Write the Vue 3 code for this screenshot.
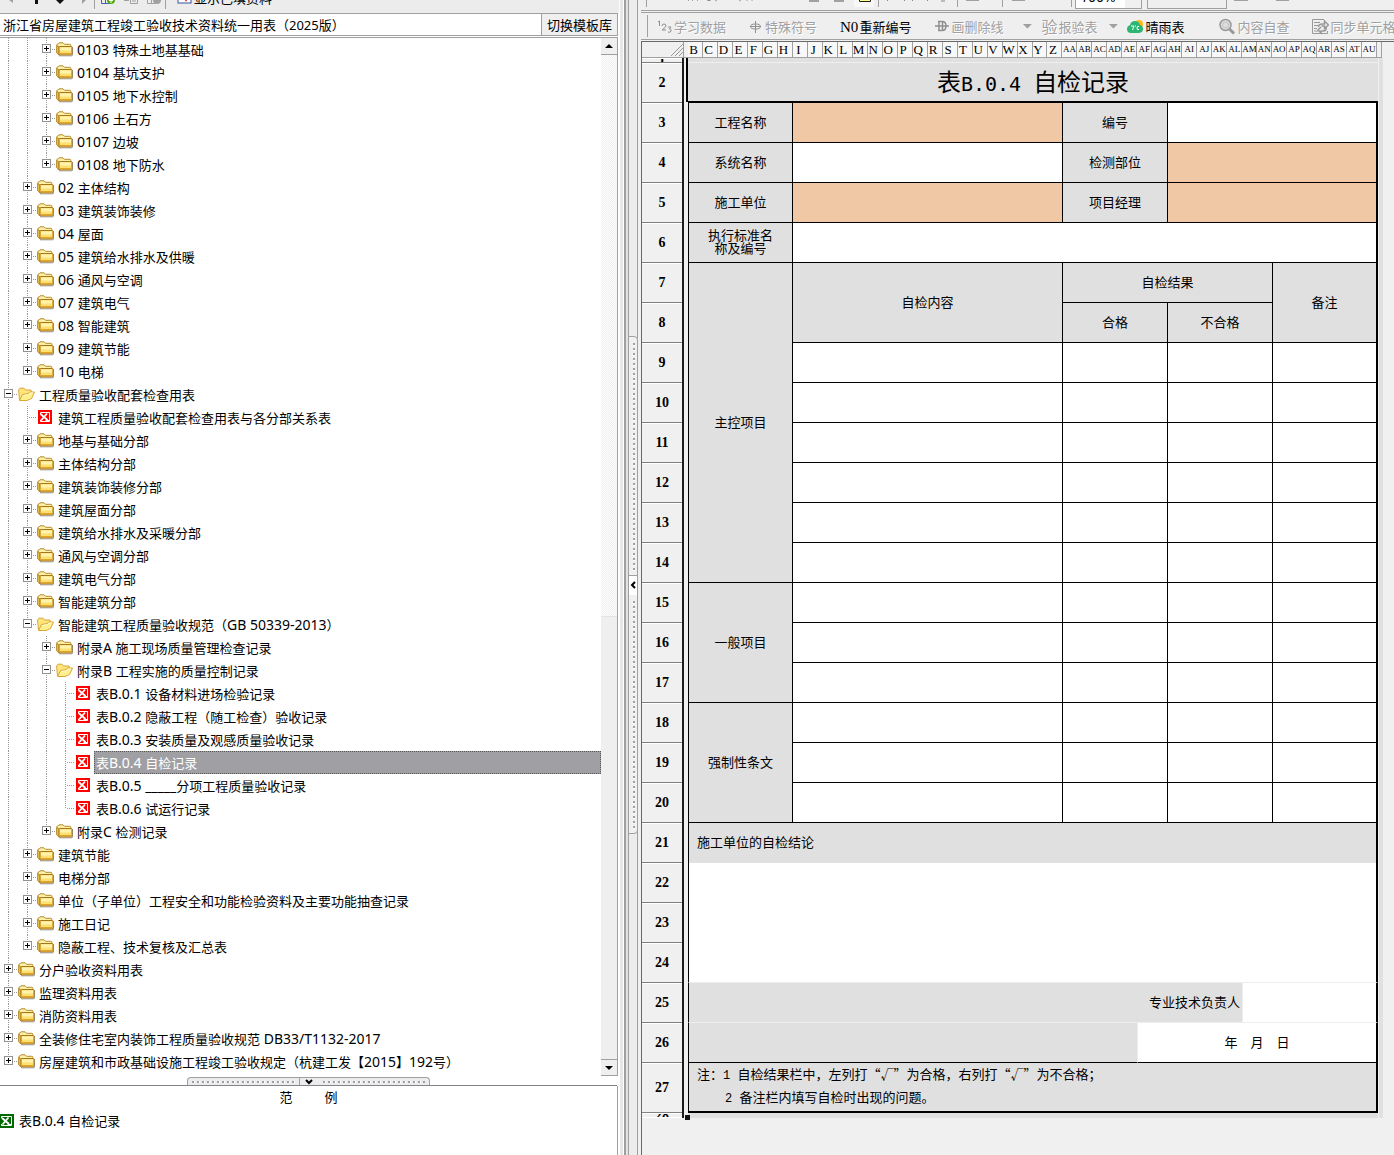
<script setup>
import { computed, ref } from 'vue';

// [nivel, tipo, texto] -> c: carpeta cerrada, o: carpeta abierta, x: hoja
const nodes = [
    [2, 'c', '0103 特殊土地基基础'],
    [2, 'c', '0104 基坑支护'],
    [2, 'c', '0105 地下水控制'],
    [2, 'c', '0106 土石方'],
    [2, 'c', '0107 边坡'],
    [2, 'c', '0108 地下防水'],
    [1, 'c', '02 主体结构'],
    [1, 'c', '03 建筑装饰装修'],
    [1, 'c', '04 屋面'],
    [1, 'c', '05 建筑给水排水及供暖'],
    [1, 'c', '06 通风与空调'],
    [1, 'c', '07 建筑电气'],
    [1, 'c', '08 智能建筑'],
    [1, 'c', '09 建筑节能'],
    [1, 'c', '10 电梯'],
    [0, 'o', '工程质量验收配套检查用表'],
    [1, 'x', '建筑工程质量验收配套检查用表与各分部关系表'],
    [1, 'c', '地基与基础分部'],
    [1, 'c', '主体结构分部'],
    [1, 'c', '建筑装饰装修分部'],
    [1, 'c', '建筑屋面分部'],
    [1, 'c', '建筑给水排水及采暖分部'],
    [1, 'c', '通风与空调分部'],
    [1, 'c', '建筑电气分部'],
    [1, 'c', '智能建筑分部'],
    [1, 'o', '智能建筑工程质量验收规范（GB 50339-2013）'],
    [2, 'c', '附录A 施工现场质量管理检查记录'],
    [2, 'o', '附录B 工程实施的质量控制记录'],
    [3, 'x', '表B.0.1 设备材料进场检验记录'],
    [3, 'x', '表B.0.2 隐蔽工程（随工检查）验收记录'],
    [3, 'x', '表B.0.3 安装质量及观感质量验收记录'],
    [3, 'x', '表B.0.4 自检记录'],
    [3, 'x', '表B.0.5 _____分项工程质量验收记录'],
    [3, 'x', '表B.0.6 试运行记录'],
    [2, 'c', '附录C 检测记录'],
    [1, 'c', '建筑节能'],
    [1, 'c', '电梯分部'],
    [1, 'c', '单位（子单位）工程安全和功能检验资料及主要功能抽查记录'],
    [1, 'c', '施工日记'],
    [1, 'c', '隐蔽工程、技术复核及汇总表'],
    [0, 'c', '分户验收资料用表'],
    [0, 'c', '监理资料用表'],
    [0, 'c', '消防资料用表'],
    [0, 'c', '全装修住宅室内装饰工程质量验收规范 DB33/T1132-2017'],
    [0, 'c', '房屋建筑和市政基础设施工程竣工验收规定（杭建工发【2015】192号）'],
];

const selected = ref(31);

// Separa el texto latino del chino para darle su propio tamaño
const split = (text) =>
    (text.match(/[\x20-\x7e]+|[^\x20-\x7e]+/g) || []).map((t) => ({ t, latin: t.charCodeAt(0) < 127 }));

// ¿Sigue habiendo hermanos en ese nivel más abajo?
const continues = (index, level) => {
    for (let i = index + 1; i < nodes.length; i++) {
        if (nodes[i][0] === level) return true;
        if (nodes[i][0] < level) return false;
    }
    return false;
};

const rows = computed(() =>
    nodes.map(([level, kind, text], i) => ({
        kind,
        runs: split(text),
        cells: Array.from({ length: level + 1 }, (_, l) => ({
            own: l === level,
            line: continues(i, l) ? 'full' : l === level ? 'half' : 'none',
        })),
    })),
);

// Columnas B..AU
const columns = Array.from({ length: 46 }, (_, i) => {
    const n = i + 1;
    return n < 26 ? String.fromCharCode(65 + n) : 'A' + String.fromCharCode(65 + n - 26);
});

const rowNumbers = Array.from({ length: 28 }, (_, i) => i + 1);
const title = split('表B.0.4 自检记录');
const groups = [
    { name: '一般项目', count: 3 },
    { name: '强制性条文', count: 3 },
];
</script>

<template>
    <div class="app">
        <section class="left">
            <div class="top-tools">
                <svg class="nav-icons" width="96" height="13" viewBox="0 0 96 13">
                    <path d="M9 0h4v3l-4-3z" fill="#a0a0a0" />
                    <path d="M35 0h3v4h-3z" fill="#111" />
                    <path d="M56 0h8l-4 4z" fill="#111" />
                    <path d="M82 0h4l-4 4z" fill="#a0a0a0" />
                    <path d="M94.500 0v9" stroke="#a0a0a0" />
                </svg>
                <svg class="edit-icons" width="70" height="13" viewBox="0 0 70 13">
                    <path d="M5.500 0v3.500h10M9.500 0v3" stroke="#3f62b5" fill="none" />
                    <circle cx="15" cy="0" r="4" fill="#58ad12" />
                    <path d="M15 0v3M13 .5h4" stroke="#fff" />
                    <path d="M28 .5h5M34.500 0v3.500h7V0M36 1h4" stroke="#a0a0a0" fill="none" />
                    <path d="M51.500 0v3.500h8M55.500 0v3" stroke="#a0a0a0" fill="none" />
                    <circle cx="61" cy="0" r="4" fill="#a0a0a0" />
                    <path d="M69.500 0v9" stroke="#a0a0a0" />
                </svg>
                <label class="show-filled">
                    <svg width="15" height="15" viewBox="0 0 15 15">
                        <rect x="1" y="1" width="13" height="11" fill="#fff" stroke="#3551a5" />
                        <path d="M7 7h4l-2 4z" fill="#e11" />
                    </svg>
                    显示已填资料
                </label>
            </div>
            <div class="library">
                <input class="library-name" type="text" aria-label="模板库" value="浙江省房屋建筑工程竣工验收技术资料统一用表（2025版）" readonly />
                <button class="library-switch" type="button">切换模板库</button>
            </div>
            <div class="tree-box">
                <ul class="tree">
                    <li v-for="(row, i) in rows" :key="i" class="node">
                        <span v-for="(cell, c) in row.cells" :key="c" class="guide" :class="[cell.line, { own: cell.own }]">
                            <button
                                v-if="cell.own && row.kind !== 'x'"
                                class="toggle"
                                :class="{ plus: row.kind === 'c' }"
                                type="button"
                                :aria-expanded="row.kind === 'o'"
                                aria-label="展开"
                            ></button>
                        </span>
                        <svg v-if="row.kind === 'c'" class="icon" width="18" height="16" viewBox="0 0 18 16">
                            <path d="M3 13.800h12.500q1 0 1-1V5" fill="none" stroke="#6b6b6b" stroke-opacity=".7" />
                            <path d="M.8 10.500V3q0-1 1-1L3 .8h4L8.500 2.300h5.300q1 0 1 1v1.200" fill="#fff0a8" stroke="#b58a2a" />
                            <path d="M.8 3.500v7.500l2.200 2V5z" fill="#f5cf55" stroke="#b58a2a" />
                            <path d="M3 12.800V5.300q0-.8.800-.8h11.400q.8 0 .8.800v6.700q0 .8-.8.800z" fill="#ffdf70" stroke="#a8761a" />
                            <path d="M4 5.500h11v3H4z" fill="#fff3ae" />
                            <path d="M4 11h11v1.500H4z" fill="#dfa42c" />
                        </svg>
                        <svg v-else-if="row.kind === 'o'" class="icon" width="18" height="16" viewBox="0 0 18 16">
                            <path d="M1.500 13L.6 3 2 1.200h4L7.500 3H13l.5 3" fill="#ffe57c" stroke="#d9a638" />
                            <path d="M1.500 13.500L4.500 7.500l6-1 1-1.500h5L13.500 11.500l-4.500 2z" fill="#fff08f" stroke="#d9a638" />
                            <path d="M5.500 8.500l5.500-1 .8-1.500H15" fill="none" stroke="#fffbd0" />
                        </svg>
                        <svg v-else class="icon sheet-icon" width="17" height="16" viewBox="0 0 17 16">
                            <rect width="14" height="14" fill="#f00" />
                            <path d="M2.500 4V2.500h9v9h-9V10" fill="none" stroke="#fff" />
                            <path d="M2.500 4l7 6M9 3.500l-6 7" stroke="#fff" stroke-width="1.800" />
                            <path d="M7.500 10.500h3.500" fill="none" stroke="#fff" />
                        </svg>
                        <button class="caption" :class="{ selected: selected === i }" type="button" @click="selected = i">
                            <span v-for="(run, r) in row.runs" :key="r" :class="{ latin: run.latin }">{{ run.t }}</span>
                        </button>
                    </li>
                </ul>
                <div class="scrollbar">
                    <button class="scroll-btn" type="button" aria-label="向上"><span class="tri up"></span></button>
                    <div class="track"></div>
                    <div class="thumb"></div>
                    <button class="scroll-btn" type="button" aria-label="向下"><span class="tri down"></span></button>
                </div>
            </div>
            <div class="h-split">
                <div class="h-handle">
                    <span class="dots"></span>
                    <button class="h-fold" type="button" aria-label="折叠">
                        <svg width="10" height="6" viewBox="0 0 10 6"><path d="M2 1l3 3 3-3" fill="none" stroke="#000" stroke-width="2" /></svg>
                    </button>
                    <span class="dots"></span>
                </div>
            </div>
            <div class="samples">
                <h2 class="samples-title"><span>范</span><span>例</span></h2>
                <a class="sample" href="#">
                    <svg width="14" height="14" viewBox="0 0 14 14">
                        <rect width="14" height="14" fill="#006a00" />
                        <path d="M1.500 4V2.500h10v9h-10V10" fill="none" stroke="#fff" />
                        <path d="M2 4l7 6M8.500 3.500l-6 7" stroke="#fff" stroke-width="1.800" />
                        <path d="M7.500 10.500h3.500" fill="none" stroke="#fff" />
                    </svg>
                    <span class="sample-name">表<span class="latin">B.0.4 </span>自检记录</span>
                </a>
            </div>
        </section>

        <div class="v-split">
            <div class="v-handle">
                <span class="dots"></span>
                <button class="v-fold" type="button" aria-label="折叠">
                    <svg width="6" height="8" viewBox="0 0 6 8"><path d="M5 1L2 4l3 3" fill="none" stroke="#000" stroke-width="2" /></svg>
                </button>
                <span class="dots"></span>
            </div>
        </div>

        <section class="right">
            <div class="format-tools">
                <svg class="format-icons" width="428" height="10" viewBox="0 0 428 10">
                    <path d="M-.5 0v7" stroke="#a0a0a0" />
                    <path d="M41 0l1 1M45 0l1 1M50 0l1 1M60 0h3v1M68 0l2 1M100 0v1M105 0v1M92 0l2 1" stroke="#a0a0a0" />
                    <path d="M162 1h10M187 1h10" stroke="#a0a0a0" stroke-width="2" />
                    <rect x="207" width="20" height="7" fill="#f8f8f8" />
                    <path d="M212.500 0v1.500h11V0" fill="#ffff8c" stroke="#222" />
                    <path d="M231.500 0v7M310.500 0v7M355.500 0v7M424.500 0v7" stroke="#a0a0a0" />
                    <path d="M240.500 0v1M257.500 0v1M265.500 0v1M280.500 0v1M298 1h-4" stroke="#888" fill="none" />
                    <path d="M319 0h13M365 0h13" stroke="#a0a0a0" stroke-width="2" />
                </svg>
                <input class="zoom" type="text" aria-label="显示比例" value="100%" />
                <input class="combo" type="text" aria-label="字体" />
                <svg class="tail-icons" width="60" height="10" viewBox="0 0 60 10">
                    <path d="M0 .5h14M42 .5h13" stroke="#a0a0a0" />
                </svg>
            </div>
            <div class="form-tools">
                <button class="tool off" type="button">
                    <svg width="16" height="16" viewBox="0 0 16 16" fill="none" stroke="#909090">
                        <path d="M1 3l1.500-1v5M5 7q0-2 2-2t2 2q0 1-4 4h4M11 8h3l-1.500 2q2 0 1.500 2t-3 1" />
                    </svg>
                    学习数据
                </button>
                <button class="tool off" type="button">
                    <svg width="15" height="16" viewBox="0 0 15 16" fill="none" stroke="#909090">
                        <path d="M6.500 2v12M1.500 7.500q0-2.500 5-2.500t5 2.500-5 2.500-5-2.500zM1 7.500h11" />
                    </svg>
                    特殊符号
                </button>
                <button class="tool" type="button"><span class="no">N0</span>重新编号</button>
                <button class="tool off" type="button">
                    <svg width="16" height="16" viewBox="0 0 16 16" fill="none" stroke="#909090" stroke-width="1.500">
                        <path d="M4 2.500h4q4 0 4 4.500t-4 4.500H4M5 2.500v9M1 7h14M8.500 2.500v9" />
                    </svg>
                    画删除线
                </button>
                <button class="arrow" type="button" aria-label="更多删除线"></button>
                <button class="tool off report" type="button"><span class="check">验</span>报验表</button>
                <button class="arrow" type="button" aria-label="更多报验表"></button>
                <button class="tool weather" type="button">
                    <svg width="17" height="16" viewBox="0 0 17 16">
                        <circle cx="12" cy="5" r="4" fill="#ffb81c" />
                        <path d="M4 14q-4 0-4-4 0-3 3-4 1-4 5-4 4 0 5 4 3 .5 3 4t-4 4z" fill="#2bb673" />
                        <path d="M4 7h3L5.500 11M12 7.500q-2-1-2 1.500t2 1.500M8 7h1" fill="none" stroke="#fff" />
                    </svg>
                    晴雨表
                </button>
                <button class="tool off" type="button">
                    <svg width="18" height="18" viewBox="0 0 18 18" fill="none" stroke="#999">
                        <circle cx="7.500" cy="7" r="5.500" fill="#ddd" stroke-width="1.500" />
                        <circle cx="7.500" cy="7" r="3" stroke="#c4c4c4" />
                        <path d="M11.500 11l4.500 4.500" stroke-width="3" />
                    </svg>
                    内容自查
                </button>
                <button class="tool off" type="button">
                    <svg width="17" height="18" viewBox="0 0 17 18" fill="none" stroke="#999">
                        <path d="M12 1.500H.5v14h15V13M2 4.500h6M2 7.500h4M2 10.500h3M2 13h4" />
                        <path d="M6.500 9q0-3 4-3h2V3l4 4-4 3.500V8h-3M14 9q1 4-3 4H9v2l-3-3 3-3" stroke-width="1.500" />
                    </svg>
                    同步单元格
                </button>
            </div>
            <div class="sheet">
                <div class="col-heads">
                    <span class="corner">
                        <svg width="12" height="12" viewBox="0 0 12 12" stroke="#999"><path d="M0 12L12 0M4 12l8-8M8 12l4-4" /></svg>
                    </span>
                    <div class="letters">
                        <span v-for="c in columns" :key="c" :class="{ wide: c.length > 1 }">{{ c }}</span>
                    </div>
                    <span class="col-tail"></span>
                </div>
                <div class="sheet-body">
                    <div class="row-heads">
                        <span v-for="n in rowNumbers" :key="n" :class="{ first: n === 1, note: n === 27, last: n === 28 }">{{ n }}</span>
                    </div>
                    <div class="freeze"><span class="active-edge"></span><span class="fill-handle"></span></div>
                    <table class="form">
                        <colgroup>
                            <col class="w105" /><col class="w270" /><col class="w75" /><col class="w30" /><col class="w75" /><col class="w30" /><col class="w105" />
                        </colgroup>
                        <tbody>
                            <tr class="sliver"><td class="g plain" colspan="7"></td></tr>
                            <tr>
                                <td class="g title" colspan="7"><span v-for="(run, r) in title" :key="r" :class="{ mono: run.latin }">{{ run.t }}</span></td>
                            </tr>
                            <tr><th>工程名称</th><td class="peach"></td><th colspan="2">编号</th><td colspan="3"></td></tr>
                            <tr><th>系统名称</th><td></td><th colspan="2">检测部位</th><td class="peach" colspan="3"></td></tr>
                            <tr><th>施工单位</th><td class="peach"></td><th colspan="2">项目经理</th><td class="peach" colspan="3"></td></tr>
                            <tr><th class="tight">执行标准名<br />称及编号</th><td colspan="6"></td></tr>
                            <tr>
                                <th rowspan="8">主控项目</th>
                                <th rowspan="2">自检内容</th>
                                <th colspan="4">自检结果</th>
                                <th rowspan="2">备注</th>
                            </tr>
                            <tr><th colspan="2">合格</th><th class="inner" colspan="2">不合格</th></tr>
                            <tr v-for="n in 6" :key="n"><td></td><td colspan="2"></td><td colspan="2"></td><td></td></tr>
                            <template v-for="g in groups" :key="g.name">
                                <tr v-for="n in g.count" :key="n">
                                    <th v-if="n === 1" :rowspan="g.count">{{ g.name }}</th>
                                    <td></td><td colspan="2"></td><td colspan="2"></td><td></td>
                                </tr>
                            </template>
                            <tr><td class="g open text" colspan="7">施工单位的自检结论</td></tr>
                            <tr class="tall"><td class="soft" colspan="7"></td></tr>
                            <tr><td class="g soft sign" colspan="5">专业技术负责人</td><td class="soft" colspan="2"></td></tr>
                            <tr><td class="g soft-right" colspan="3"></td><td class="date" colspan="4">年　月　日</td></tr>
                            <tr class="note-row">
                                <td class="g text notes" colspan="7">
                                    <p>注：<span class="num">1 </span>自检结果栏中，左列打“√”为合格，右列打“√”为不合格；</p>
                                    <p class="second"><span class="num">2 </span>备注栏内填写自检时出现的问题。</p>
                                </td>
                            </tr>
                            <tr class="sliver"><td class="g plain" colspan="7"></td></tr>
                        </tbody>
                    </table>
                    <div class="edge"></div>
                </div>
            </div>
        </section>
    </div>
</template>

<style>
body {
    margin: 0;
    background: #f0f0f0;
}
</style>

<style scoped>
.app {
    display: grid;
    grid-template-columns: minmax(0, 619fr) 22px minmax(0, 753fr);
    min-height: 100vh;
    overflow: hidden;
    font: 13px/23px 'Noto Sans', 'Noto Sans CJK SC', sans-serif;
    color: #000;
}

.app * {
    box-sizing: border-box;
}

button,
input {
    margin: 0;
    padding: 0;
    border: 0;
    border-radius: 0;
    background: none;
    font: inherit;
    color: inherit;
}

svg {
    display: block;
    flex: none;
}

.latin {
    font-size: 14px;
}

/* ===== Panel izquierdo ===== */
.left {
    display: flex;
    flex-direction: column;
    background: #fff;
}

.top-tools {
    display: flex;
    height: 13px;
    overflow: hidden;
    background: #ececec;
}

.show-filled {
    display: flex;
    align-self: flex-end;
    align-items: center;
    gap: 2px;
    padding: 0 0 3px 11px;
    white-space: nowrap;
}

.library {
    display: flex;
    height: 23px;
    margin-right: 1px;
    border: solid #a0a0a0;
    border-width: 1px 1px 1px 0;
}

.library-name {
    flex: 1;
    min-width: 0;
    padding-left: 3px;
    padding-top: 2px;
}

.library-switch {
    width: 76px;
    border-left: 1px solid #a0a0a0;
    background: #efefef;
}

.tree-box {
    display: flex;
    margin: 1px 1px 0 0;
    border: solid #a0a0a0;
    border-width: 1px 1px 0 0;
    min-height: 1039px;
}

.tree {
    flex: 1;
    min-width: 0;
    margin: 0;
    padding: 0;
    list-style: none;
}

.node {
    display: flex;
    height: 23px;
}

.guide {
    position: relative;
    flex: none;
    width: 19px;
    --dots: repeating-linear-gradient(#999 0 1px, transparent 1px 2px);
}

.guide.full {
    background: var(--dots) 8px 0 / 1px 100% no-repeat;
}

.guide.half {
    background: var(--dots) 8px 0 / 1px 12px no-repeat;
}

.guide.own::after {
    content: '';
    position: absolute;
    left: 9px;
    top: 11px;
    width: 9px;
    height: 1px;
    background: repeating-linear-gradient(90deg, transparent 0 1px, #999 1px 2px);
}

.toggle {
    position: absolute;
    z-index: 1;
    left: 4px;
    top: 6px;
    width: 9px;
    height: 9px;
    border: 1px solid #919191;
    background: linear-gradient(#000, #000) center / 5px 1px no-repeat #fff;
}

.toggle.plus {
    background: linear-gradient(#000, #000) center / 5px 1px no-repeat,
        linear-gradient(#000, #000) center / 1px 5px no-repeat #fff;
}

.icon {
    margin-top: 4px;
    margin-left: -1px;
    margin-right: 1px;
    overflow: visible;
}

.sheet-icon {
    margin-left: 0;
}

.caption {
    flex: 1;
    min-width: 0;
    padding: 0 1px;
    border: 1px solid transparent;
    line-height: 22px;
    text-align: left;
    white-space: pre;
    overflow: hidden;
}

.caption.selected {
    border: 1px dotted #555;
    background: #a0a0a4;
    color: #fff;
}

.scrollbar {
    display: flex;
    flex-direction: column;
    width: 16px;
}

.scroll-btn {
    display: grid;
    place-items: center;
    height: 17px;
    border: solid #a0a0a0;
    border-width: 0 0 1px;
    background: #efefef;
}

.scroll-btn:last-child {
    border-width: 1px 0;
}

.tri {
    border: solid transparent;
    border-width: 0 4px;
}

.tri.up {
    border-bottom: 4px solid #000;
}

.tri.down {
    border-top: 4px solid #000;
}

.track {
    flex: 562;
    background: repeating-conic-gradient(#eee 0 25%, #fff 0 50%) 0 0 / 2px 2px;
}

.thumb {
    flex: 442;
    background: #efefef;
    border-top: 1px solid #e3e3e3;
}

.h-split {
    display: flex;
    justify-content: center;
    height: 10px;
    margin-right: 2px;
    padding-top: 1px;
    border-bottom: 1px solid #82828a;
}

.h-handle {
    display: flex;
    width: 243px;
    height: 8px;
    border: 1px solid #a0a0a0;
    border-bottom: 0;
    border-radius: 4px 4px 0 0;
    background: #ececec;
}

.dots {
    flex: 1;
}

.h-handle .dots {
    margin: 3px 4px 0;
    height: 2px;
    background: repeating-linear-gradient(90deg, #a0a0a0 0 2px, #fff 2px 3px, #ececec 3px 5px);
}

.h-fold {
    display: grid;
    place-items: center;
    width: 20px;
    border-left: 1px solid #a0a0a0;
}

.samples {
    flex: 1;
    margin-right: 1px;
    border-right: 1px solid #a0a0a0;
}

.samples-title {
    display: flex;
    justify-content: center;
    gap: 32px;
    margin: 0;
    font: inherit;
}

.sample {
    display: flex;
    align-items: center;
    gap: 5px;
    color: inherit;
    text-decoration: none;
}

.sample-name {
    white-space: pre;
}

/* ===== Divisor vertical ===== */
.v-split {
    display: flex;
    flex-direction: column;
    justify-content: center;
    padding: 14px 3px 0 9px;
    background: linear-gradient(
        90deg,
        #fff 0 1px,
        #e6e6e6 1px 4px,
        #fff 4px 5px,
        #a0a0a0 5px 7px,
        #e3e3e3 7px 9px,
        #a0a0a0 9px 10px,
        #ececec 10px 18px,
        #a0a0a0 18px 19px,
        #f0f0f0 19px
    );
}

.v-handle {
    display: flex;
    flex-direction: column;
    height: 498px;
    border: 1px solid #a0a0a0;
    border-radius: 0 4px 4px 0;
    background: #f0f0f0;
}

.v-handle .dots {
    width: 2px;
    margin: 6px 0 4px 4px;
    background: repeating-linear-gradient(#a0a0a0 0 2px, #fff 2px 3px, #f0f0f0 3px 5px);
}

.v-fold {
    display: grid;
    place-items: center;
    height: 20px;
    border-top: 1px solid #a0a0a0;
    background: #fff;
}

/* ===== Panel derecho ===== */
.right {
    min-width: 0;
    background: #f0f0f0;
    overflow: hidden;
}

.format-tools {
    display: flex;
    height: 11px;
    padding-left: 6px;
    overflow: hidden;
    background: #efefef;
    border-bottom: 1px solid #a0a0a0;
}

.format-icons {
    overflow: visible;
}

.zoom,
.combo {
    align-self: flex-start;
    flex: none;
    height: 24px;
    margin-top: -15px;
    border: 1px solid #a0a0a0;
}

.zoom {
    width: 67px;
    padding: 0 0 1px 4px;
    background: linear-gradient(#f0f0f0, #f0f0f0) right / 16px 100% no-repeat #fff;
    font-size: 14px;
}

.combo {
    width: 80px;
    margin-left: 5px;
}

.tail-icons {
    margin-left: 7px;
}

.form-tools {
    display: flex;
    align-items: center;
    height: 28px;
    margin-top: 1px;
    padding-left: 16px;
    border: solid #a0a0a0;
    border-width: 1px 0;
    background: linear-gradient(#a0a0a0, #a0a0a0) 6px 2px / 1px 22px no-repeat #efefef;
    white-space: nowrap;
}

.tool {
    display: flex;
    flex: none;
    align-items: center;
    gap: 1px;
    padding-top: 2px;
    margin-right: 23px;
}

.tool.off {
    color: #a0a0a0;
    text-shadow: 1px 1px #fff;
}

.tool.report {
    margin-right: 15px;
}

.tool.weather {
    margin-right: 34px;
}

.no {
    font: 15px/20px 'Liberation Serif', serif;
}

.check {
    font-size: 16px;
}

.arrow {
    flex: none;
    width: 10px;
    height: 5px;
    margin: 0 9px 0 -4px;
    background: #a0a0a0;
    clip-path: polygon(0 0, 100% 0, 50% 100%);
}

.sheet {
    margin-top: 1px;
    border: solid #696969;
    border-width: 1px 0 0 1px;
    min-height: calc(100vh - 41px);
}

.col-heads {
    display: flex;
    height: 16px;
    padding-right: 12px;
    background: #f0f0f0;
}

.corner {
    display: flex;
    flex: none;
    justify-content: flex-end;
    align-items: flex-end;
    width: 46px;
    padding: 0 5px 1px 0;
    border-bottom: 1px solid #a0a0a0;
    background: linear-gradient(#a0a0a0, #a0a0a0) 41px 0 / 1px 100% no-repeat;
}

.letters {
    display: grid;
    grid-template-columns: repeat(46, minmax(0, 1fr));
    flex: 1;
    font: 13px/15px 'Liberation Serif', serif;
}

.letters span {
    padding-right: 3px;
    border: solid #a0a0a0;
    border-width: 0 1px 1px 0;
    background: #f8f8f8;
    text-align: center;
    overflow: hidden;
}

.letters .wide {
    padding: 0;
    font-size: 9px;
}

.col-tail {
    flex: none;
    width: 5px;
    border: solid #a0a0a0;
    border-width: 0 1px 1px 0;
}

.sheet-body {
    display: flex;
    align-items: flex-start;
    padding-right: 12px;
}

.row-heads {
    display: flex;
    flex: none;
    flex-direction: column;
    width: 40px;
    font: bold 14px/38px 'Liberation Serif', serif;
    text-align: center;
}

.row-heads span {
    height: 40px;
    border-top: 1px solid #fff;
    border-bottom: 1px solid #808080;
    overflow: hidden;
}

.row-heads .first,
.row-heads .last {
    height: 5px;
    line-height: 3px;
}

.row-heads .first {
    line-height: 0;
}

.row-heads .last {
    border-bottom-color: #fff;
}

.row-heads .note {
    height: 50px;
    line-height: 48px;
}

.freeze {
    position: relative;
    flex: none;
    align-self: stretch;
    width: 6px;
    border-left: 2px solid #1c1c1c;
    background: #f0f0f0;
}

.active-edge {
    position: absolute;
    right: 0;
    top: 0;
    width: 2px;
    height: 44px;
    background: #000;
}

.fill-handle {
    position: absolute;
    z-index: 1;
    left: 1px;
    bottom: -2px;
    width: 5px;
    height: 5px;
    background: #111;
}

.form {
    flex: 1;
    min-width: 0;
    width: 100%;
    table-layout: fixed;
    border-collapse: separate;
    border-spacing: 0;
    font: 13px/20px 'Noto Sans CJK SC', sans-serif;
}

.w105 {
    width: 105px;
}

.w270 {
    width: 270px;
}

.w75 {
    width: 75px;
}

.w30 {
    width: 30px;
}

.form tr {
    height: 40px;
}

.form .sliver {
    height: 5px;
}

.form .tall {
    height: 120px;
}

.form .note-row {
    height: 50px;
}

.form th,
.form td {
    padding: 0 0 2px;
    border: solid #000;
    border-width: 0 1px 1px 0;
    background: #fff;
    font-weight: normal;
    text-align: center;
}

.form th,
.form .g {
    background: #e0e0e0;
}

.form .peach {
    background: #f0c8a5;
}

.form tr > :first-child[rowspan],
.form th:first-child:not([colspan]),
.form .text,
.form .soft[colspan='7'] {
    border-left-width: 1px;
}

.form td:last-child,
.form tr > th:last-child:not(.inner) {
    border-right-width: 2px;
}

.form .plain,
.form .plain:last-child {
    padding: 0;
    border-color: #f0f0f0;
    border-width: 0 0 1px;
}

.form .sliver:last-child .plain {
    border-width: 0;
}

.form .title,
.form .title:last-child {
    padding: 0;
    border-width: 0 0 2px;
    font-size: 24px;
    line-height: 32px;
    white-space: pre;
}

.mono {
    font: 20px/32px 'DejaVu Sans Mono', monospace;
}

.form .tight {
    padding-bottom: 4px;
    line-height: 13px;
}

.form .open {
    border-bottom-width: 0;
}

.form .text {
    padding-left: 8px;
    text-align: left;
}

.form .soft {
    border-bottom-color: #eee;
}

.form .sign {
    padding-right: 2px;
    border-left: 1px solid #000;
    border-right-color: #eee;
    text-align: right;
}

.form .soft-right {
    border-left: 1px solid #000;
    border-right-color: #eee;
}

.form .notes {
    border-bottom-width: 2px;
}

.notes p {
    margin: 0;
    line-height: 21px;
}

.notes .second {
    padding-left: 28px;
}

.num {
    font: 12px/20px 'Liberation Mono', monospace;
    white-space: pre;
}

.edge {
    align-self: stretch;
    flex: none;
    width: 5px;
    border-left: 1px solid #f0f0f0;
    background: #e0e0e0;
}
</style>
